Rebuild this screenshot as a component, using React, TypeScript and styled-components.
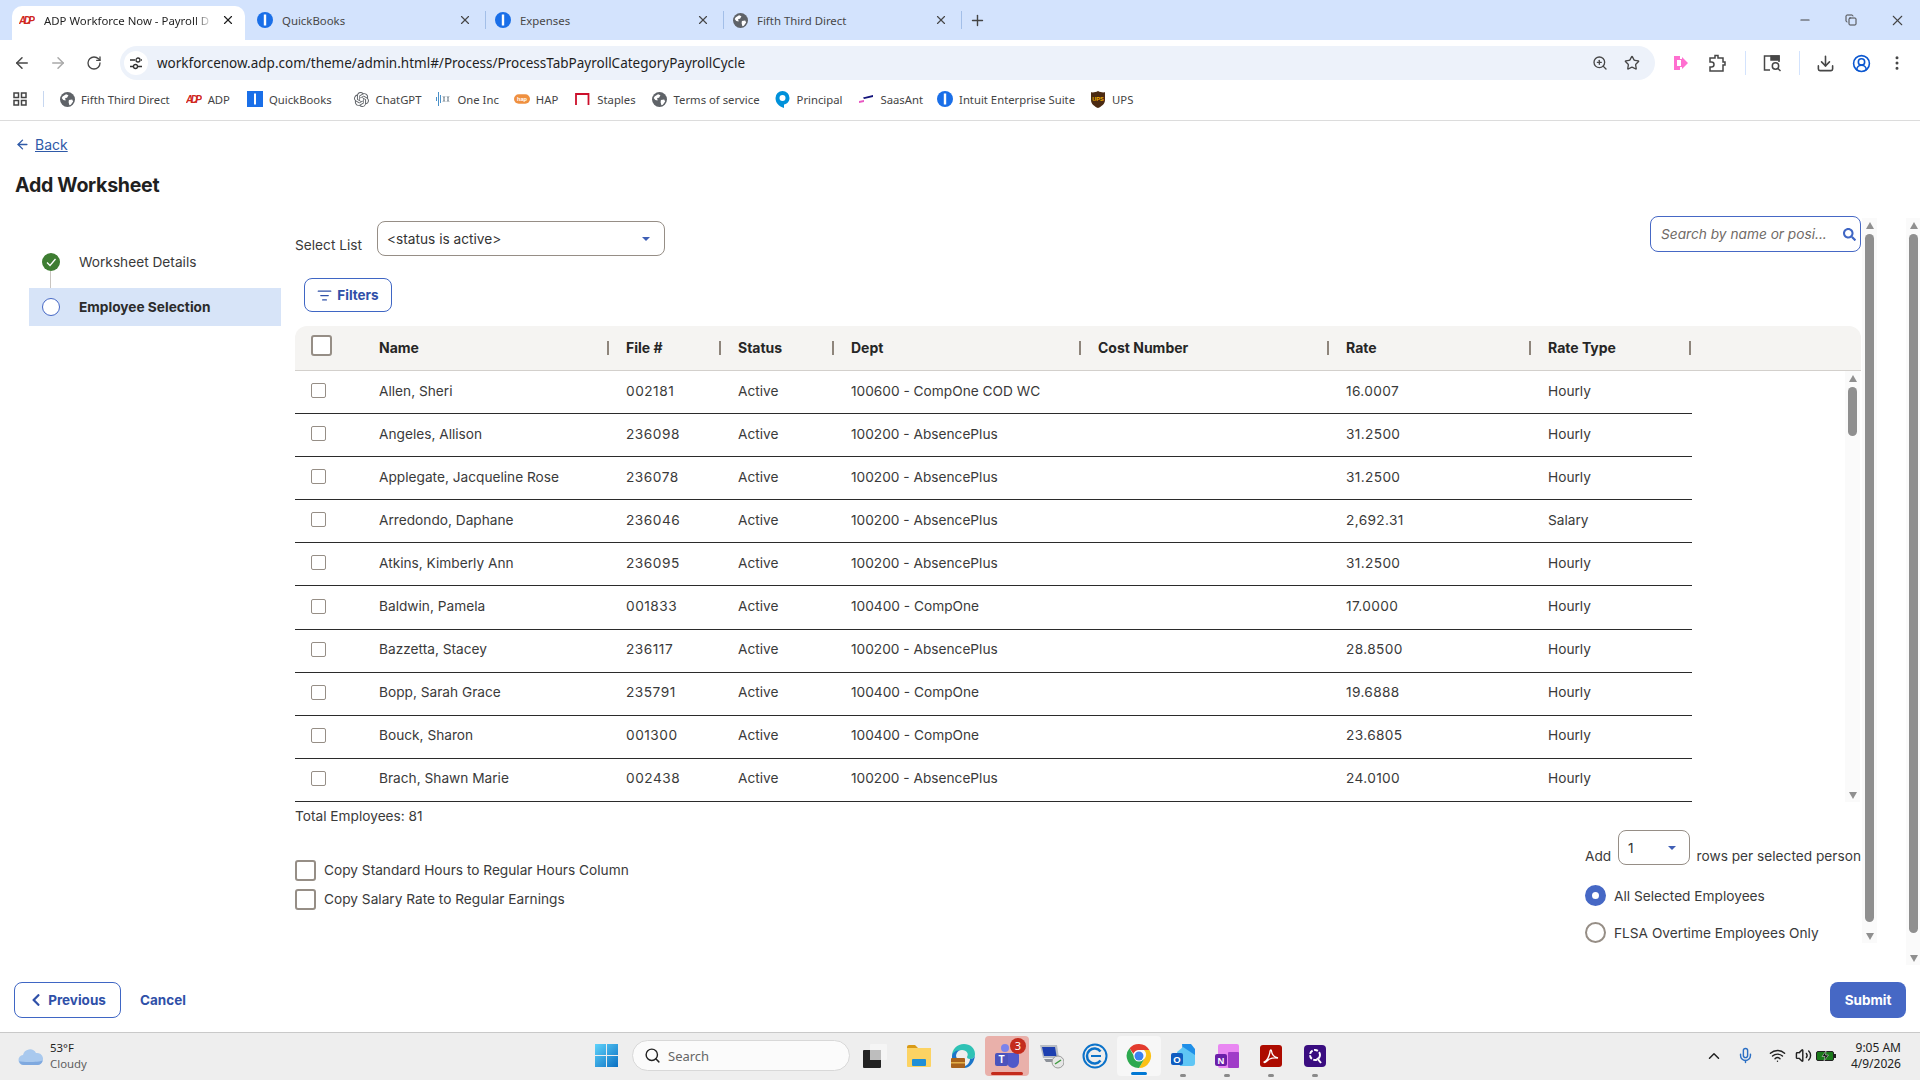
import React from 'react'
import styled, { createGlobalStyle } from 'styled-components'
import {
  ArrowLeft, ArrowRight, RotateCw, Star, ZoomIn, Download, EllipsisVertical, Minus, X, Plus,
  ListFilter, ChevronUp, Mic, Wifi, Volume2, Search as SearchGlyph, CircleUserRound, Copy,
} from 'lucide-react'
import { FaChevronLeft, FaSearch } from 'react-icons/fa'
import { SiOpenai } from 'react-icons/si'

const chromeFont = `"Noto Sans", "Liberation Sans", sans-serif`
const pageFont = `Inter, "Liberation Sans", sans-serif`

const GlobalStyle = createGlobalStyle`
  html, body {
    margin: 0;
    padding: 0;
    width: 1920px;
    height: 1080px;
    overflow: hidden;
    background: #fff;
  }
  * { box-sizing: border-box; }
`

const Screen = styled.div`
  width: 1920px;
  height: 1080px;
  display: flex;
  flex-direction: column;
  font-family: ${pageFont};
  font-size: 13.7px;
  color: #3a3a3a;
  overflow: hidden;
`

/* browser chrome */
const TabStrip = styled.div`
  height: 40px;
  flex: none;
  display: flex;
  align-items: flex-end;
  padding-left: 12px;
  background: #d3e3fd;
  font-family: ${chromeFont};
  font-size: 11.4px;
  color: #444;
`

const Tab = styled.div<{ $active?: boolean }>`
  position: relative;
  width: ${p => (p.$active ? '233px' : '238px')};
  margin-right: ${p => (p.$active ? '5px' : '0')};
  height: 34px;
  display: flex;
  align-items: center;
  padding: 0 ${p => (p.$active ? '10px' : '16px')} 6px 7px;
  gap: 9px;
  border-radius: 10px 10px 0 0;
  background: ${p => (p.$active ? '#fff' : 'transparent')};
  color: ${p => (p.$active ? '#1f1f1f' : '#474747')};
`

const TabSeparator = styled.span`
  position: absolute;
  right: 2px;
  top: 5px;
  width: 1px;
  height: 18px;
  background: #a3bfe8;
`

const TabTitle = styled.span<{ $fade?: boolean }>`
  flex: 1;
  overflow: hidden;
  white-space: nowrap;
  ${p => p.$fade && 'mask-image: linear-gradient(to right, #000 90%, transparent);'}
`

const NewTab = styled.div`
  height: 34px;
  width: 26px;
  margin-left: 5px;
  padding-bottom: 6px;
  display: flex;
  align-items: center;
  color: #444;
`

const WindowControls = styled.div`
  margin-left: auto;
  height: 40px;
  display: flex;
  align-items: center;
  color: #444;
`

const WindowButton = styled.div`
  width: 46px;
  display: flex;
  justify-content: center;
`

const Toolbar = styled.div`
  height: 40px;
  flex: none;
  display: flex;
  align-items: flex-end;
  padding-left: 4px;
  background: #fff;
  color: #474747;
`

const ToolSlot = styled.div<{ $dim?: boolean }>`
  width: 36px;
  height: 34px;
  display: flex;
  align-items: center;
  justify-content: center;
  color: ${p => (p.$dim ? '#a9a9a9' : '#474747')};
`

const AddressBar = styled.div`
  width: 1535px;
  height: 34px;
  margin: 0 8px 0 8px;
  padding-right: 7px;
  display: flex;
  align-items: center;
  border-radius: 17px;
  background: #edf2fa;
  font-family: ${chromeFont};
  font-size: 13.5px;
  color: #1f1f1f;
`

const SiteBadge = styled.div`
  width: 24px;
  height: 24px;
  margin: 0 9px 0 4px;
  border-radius: 50%;
  background: #fff;
  display: flex;
  align-items: center;
  justify-content: center;
`

const UrlText = styled.span`
  flex: 1;
  white-space: nowrap;
`

const AddressIcon = styled.div`
  width: 32px;
  display: flex;
  justify-content: center;
  color: #474747;
`

const ToolSeparator = styled.span<{ $left: number; $right: number }>`
  width: 1px;
  height: 24px;
  margin: 0 ${p => p.$right}px 5px ${p => p.$left}px;
  background: #d3e3fd;
`

const BookmarkBar = styled.div`
  height: 41px;
  flex: none;
  display: flex;
  align-items: center;
  padding: 0 0 2px 13px;
  border-bottom: 1px solid #dcdcdc;
  font-family: ${chromeFont};
  font-size: 11.3px;
  color: #444;
`

const BookmarkDivider = styled.span`
  width: 1px;
  height: 16px;
  margin: 0 15px 0 16px;
  background: #c7d7f0;
`

const Bookmark = styled.div<{ $gap: number }>`
  display: flex;
  align-items: center;
  gap: 6px;
  margin-right: ${p => p.$gap}px;
  white-space: nowrap;
`

const BookmarkIcon = styled.div`
  width: 16px;
  height: 16px;
  display: flex;
  align-items: center;
  justify-content: center;
`

/* page */
const Main = styled.main`
  flex: 1;
  min-height: 0;
  display: flex;
  flex-direction: column;
  background: #fff;
`

const BackLink = styled.a`
  height: 20px;
  margin: 13px 0 0 15px;
  display: flex;
  align-items: center;
  gap: 5px;
  font-size: 14px;
  color: #2f5aa8;
`

const BackText = styled.span`
  text-decoration: underline;
`

const Title = styled.h1`
  margin: 16px 0 16px 15px;
  height: 30px;
  font-size: 19.6px;
  line-height: 30px;
  font-weight: 700;
  color: #1f1f1f;
  letter-spacing: -0.3px;
`

const Columns = styled.div`
  height: 749px;
  display: flex;
  align-items: flex-start;
`

const Sidebar = styled.nav`
  width: 295px;
  flex: none;
  padding: 27px 14px 0 29px;
  display: flex;
  flex-direction: column;
  gap: 7px;
`

const Step = styled.div<{ $active?: boolean }>`
  position: relative;
  height: 38px;
  display: flex;
  align-items: center;
  padding-left: 13px;
  gap: 19px;
  font-weight: ${p => (p.$active ? 700 : 400)};
  color: ${p => (p.$active ? '#2b2b2b' : '#3a3a3a')};
  background: ${p => (p.$active ? '#d7e4f8' : 'transparent')};
`

const StepLabel = styled.span`
  padding-bottom: 1px;
`

const StepLine = styled.span`
  position: absolute;
  left: 21px;
  top: 28px;
  width: 1px;
  height: 17px;
  background: #c9c5c0;
`

const StepDot = styled.span`
  width: 18px;
  height: 18px;
  border-radius: 50%;
  border: 1px solid #4668c5;
  background: #fff;
`

const WorkArea = styled.section`
  width: 1566px;
  flex: none;
  display: flex;
  flex-direction: column;
`

const TopRow = styled.div`
  height: 40px;
  display: flex;
  align-items: flex-start;
`

const FieldLabel = styled.span`
  margin: 20px 15px 0 0;
  line-height: 18px;
  white-space: nowrap;
`

const SelectBox = styled.div<{ $wide?: boolean }>`
  width: ${p => (p.$wide ? '288px' : '72px')};
  height: 35px;
  margin-top: ${p => (p.$wide ? '5px' : '0')};
  padding: 0 ${p => (p.$wide ? '14px' : '13px')} 0 9px;
  display: flex;
  align-items: center;
  justify-content: space-between;
  border: 1px solid #968e86;
  border-radius: 8px;
  color: #333;
  background: #fff;
`

const Caret = styled.span`
  width: 0;
  height: 0;
  border-left: 4px solid transparent;
  border-right: 4px solid transparent;
  border-top: 4px solid #3f5fb5;
`

const SearchBox = styled.div`
  width: 211px;
  height: 36px;
  margin-left: auto;
  padding: 0 4px 0 10px;
  display: flex;
  align-items: center;
  justify-content: space-between;
  border: 1px solid #4668c5;
  border-radius: 8px;
  font-style: italic;
  color: #6f6a66;
  white-space: nowrap;
`

const SearchIcon = styled(FaSearch)`
  color: #3f66c4;
  font-size: 13px;
`

const OutlineButton = styled.button<{ $width: number }>`
  width: ${p => p.$width}px;
  height: ${p => (p.$width < 100 ? 34 : 36)}px;
  padding: 0;
  display: flex;
  align-items: center;
  justify-content: center;
  gap: 5px;
  background: #fff;
  border: 1px solid #3f66c4;
  border-radius: 8px;
  font-family: ${pageFont};
  font-size: 13.5px;
  font-weight: 700;
  color: #2f50a8;
`

const FiltersWrap = styled.div`
  margin: 22px 0 14px 9px;
`

const TableHead = styled.div`
  height: 45px;
  display: grid;
  grid-template-columns: 84px 247px 112px 113px 247px 248px 202px 144px;
  align-items: center;
  background: #f5f4f2;
  border-radius: 12px 12px 0 0;
  border-bottom: 1px solid #d3d0cc;
`

const HeadCell = styled.div<{ $last?: boolean }>`
  display: flex;
  align-items: center;
  justify-content: space-between;
  padding-right: ${p => (p.$last ? '1px' : '17px')};
  padding-bottom: 1px;
  font-size: 14px;
  font-weight: 700;
  color: #262626;
`

const HeadSep = styled.span`
  width: 2px;
  height: 14px;
  background: #8e857c;
`

const HeadCheckCell = styled.div`
  padding: 0 0 6px 16px;
`

const CheckBox = styled.span<{ $size: number }>`
  display: block;
  flex: none;
  width: ${p => p.$size}px;
  height: ${p => p.$size}px;
  border: ${p => (p.$size > 16 ? '2px' : '1px')} solid #968e86;
  border-radius: ${p => (p.$size > 16 ? 3 : 2)}px;
  background: #fff;
`

const TableBody = styled.div`
  height: 431px;
  display: flex;
  justify-content: space-between;
  padding-right: 1px;
`

const Rows = styled.div`
  width: 1397px;
  display: flex;
  flex-direction: column;
`

const Row = styled.div`
  flex: 1;
  display: grid;
  grid-template-columns: 84px 247px 112px 113px 247px 248px 202px 144px;
  align-items: center;
  padding-bottom: 3px;
  border-bottom: 1px solid #2b2b2b;
  color: #3a3a3a;
`

const RowCheckCell = styled.div`
  padding-left: 16px;
`

const NumberCell = styled.span<{ $spacing: number }>`
  letter-spacing: ${p => p.$spacing}px;
`

const ScrollTrack = styled.div<{ $height: number }>`
  width: 15px;
  flex: none;
  height: ${p => p.$height}px;
  display: flex;
  flex-direction: column;
  align-items: center;
  background: #fafafa;
  padding: 4px 0 3px;
`

const ArrowUp = styled.span`
  flex: none;
  width: 0;
  height: 0;
  border-left: 4.5px solid transparent;
  border-right: 4.5px solid transparent;
  border-bottom: 7px solid #8f8f8f;
`

const ArrowDown = styled(ArrowUp)`
  border-bottom: 0;
  border-top: 7px solid #8f8f8f;
`

const Thumb = styled.span<{ $height?: number; $after: number }>`
  width: 9px;
  margin: 5px 0 ${p => p.$after}px;
  border-radius: 5px;
  background: #8f8f8f;
  ${p => (p.$height ? `height: ${p.$height}px; flex: none;` : 'flex: 1;')}
`

const TrackSpacer = styled.span`
  flex: 1;
`

const Total = styled.div`
  margin-top: 4px;
  height: 20px;
  line-height: 20px;
`

const OptionsRow = styled.div`
  margin-top: 4px;
  display: flex;
  justify-content: space-between;
`

const CopyOptions = styled.div`
  padding-top: 30px;
  display: flex;
  flex-direction: column;
  gap: 9px;
`

const CopyOption = styled.label`
  height: 20px;
  display: flex;
  align-items: center;
  gap: 8px;
`

const CopyText = styled.span`
  padding-bottom: 1px;
`

const RowOptions = styled.div`
  width: 276px;
  display: flex;
  flex-direction: column;
  gap: 16px;
`

const AddLine = styled.div`
  height: 35px;
  margin-bottom: 4px;
  display: flex;
  justify-content: space-between;
  white-space: nowrap;
`

const AddText = styled.span`
  padding-top: 17px;
  line-height: 18px;
`

const RadioLine = styled.label`
  height: 21px;
  display: flex;
  align-items: center;
  gap: 8px;
`

const Radio = styled.span<{ $on?: boolean }>`
  flex: none;
  width: 21px;
  height: 21px;
  border-radius: 50%;
  border: ${p => (p.$on ? '7px solid #4668c5' : '2px solid #968e86')};
  background: #fff;
`

const InnerBar = styled.div`
  margin: 2px 29px 0 1px;
`

const PageBar = styled.div`
  margin-top: 2px;
`

const Footer = styled.div`
  margin-top: 17px;
  padding: 0 14px;
  display: flex;
  align-items: center;
`

const CancelLink = styled.a`
  margin-left: 19px;
  font-size: 13.5px;
  font-weight: 700;
  color: #2f50a8;
`

const SubmitButton = styled.button`
  margin-left: auto;
  width: 76px;
  height: 36px;
  border: 0;
  border-radius: 8px;
  background: #4668c5;
  color: #fff;
  font-family: ${pageFont};
  font-size: 13.5px;
  font-weight: 700;
`

/* taskbar */
const Taskbar = styled.footer`
  height: 48px;
  flex: none;
  display: flex;
  align-items: center;
  padding-bottom: 2px;
  background: #eeeeee;
  border-top: 1px solid #c9c9c9;
  font-family: ${chromeFont};
  font-size: 11.4px;
  color: #1f1f1f;
`

const Weather = styled.div`
  width: 595px;
  flex: none;
  padding-left: 18px;
  display: flex;
  align-items: center;
  gap: 6px;
`

const WeatherText = styled.div`
  display: flex;
  flex-direction: column;
  line-height: 16px;
`

const WeatherSub = styled.span`
  color: #5f5f5f;
`

const TaskSearch = styled.div`
  width: 218px;
  height: 31px;
  margin-left: 14px;
  margin-right: 3px;
  padding-left: 11px;
  display: flex;
  align-items: center;
  gap: 7px;
  flex: none;
  border-radius: 16px;
  border: 1px solid #d8d8d8;
  background: #fbfbfb;
  font-size: 13px;
  color: #666;
`

const TaskIcon = styled.div<{ $state?: 'alert' | 'open' | 'running' }>`
  position: relative;
  width: 44px;
  height: 40px;
  flex: none;
  display: flex;
  align-items: center;
  justify-content: center;
  border-radius: 4px;
  background: ${p => (p.$state === 'alert' ? '#e9b0aa' : p.$state === 'open' ? '#f7f7f7' : 'transparent')};
  &::after {
    content: '';
    position: absolute;
    bottom: ${p => (p.$state === 'running' ? '-1px' : '1px')};
    left: 50%;
    transform: translateX(-50%);
    display: ${p => (p.$state ? 'block' : 'none')};
    width: ${p => (p.$state === 'alert' ? '32px' : p.$state === 'open' ? '16px' : '6px')};
    height: 3px;
    border-radius: 2px;
    background: ${p => (p.$state === 'alert' ? '#c42b1c' : p.$state === 'open' ? '#0078d4' : '#8a8a8a')};
  }
`

const TeamsBadge = styled.span`
  position: absolute;
  top: 2px;
  right: 3px;
  width: 16px;
  height: 16px;
  border-radius: 50%;
  background: #c42b1c;
  color: #fff;
  font-size: 11px;
  line-height: 16px;
  text-align: center;
`

const Tray = styled.div`
  margin-left: auto;
  padding-right: 19px;
  display: flex;
  align-items: center;
  color: #222;
`

const TraySlot = styled.div<{ $color?: string; $width: number }>`
  width: ${p => p.$width}px;
  display: flex;
  justify-content: center;
  color: ${p => p.$color || '#222'};
`

const Clock = styled.div`
  margin-left: 13px;
  display: flex;
  flex-direction: column;
  align-items: flex-end;
  font-size: 12px;
  line-height: 16px;
  color: #222;
`

/* drawn icons */
const GlobeIcon = () => (
  <svg width="15" height="15" viewBox="0 0 16 16">
    <circle cx="8" cy="8" r="8" fill="#5f6368" />
    <path d="M3 4.5 6.5 2.5 9 3.5 7.5 6 5.5 6.5 6 9 3.5 8.5 1.8 6.5ZM9.5 8.5 13 8l1 2-2.5 3.5-1.5.5-.8-3Z" fill="#fff" />
  </svg>
)

const AdpIcon = () => (
  <svg width="16" height="12" viewBox="0 0 16 12">
    <text x="0" y="10" fontFamily="Liberation Sans" fontSize="10" fontWeight="700" fontStyle="italic" fill="#d0271d" textLength="16">ADP</text>
  </svg>
)

const IntuitIcon = ({ size = 16 }: { size?: number }) => (
  <svg width={size} height={size} viewBox="0 0 16 16">
    <circle cx="8" cy="8" r="8" fill="#1a6fe8" />
    <rect x="6.8" y="2.5" width="2.4" height="11" fill="#fff" />
  </svg>
)

const QuickBooksSquare = () => (
  <svg width="16" height="16" viewBox="0 0 16 16">
    <rect width="16" height="16" fill="#1a6fe8" />
    <rect x="7" y="2.5" width="2" height="11" fill="#fff" />
  </svg>
)

const OneIncIcon = () => (
  <svg width="16" height="16" viewBox="0 0 16 16" stroke="#6d9fc4" strokeWidth="1" fill="none">
    <path d="M1.5 6v4M3.5 1v14M5.5 4v8" stroke="#4a90c8" />
    <path d="M8 5l2 6M10 5l-2 6M12 5l2 6M14 5l-2 6" stroke="#9aa5ad" />
  </svg>
)

const HapIcon = () => (
  <svg width="17" height="10" viewBox="0 0 17 10">
    <rect width="17" height="10" rx="5" fill="#ef9040" />
    <text x="8.5" y="7.4" fontSize="6" fontWeight="700" textAnchor="middle" fill="#fff" fontFamily="Liberation Sans">hap</text>
  </svg>
)

const StaplesIcon = () => (
  <svg width="16" height="14" viewBox="0 0 16 14" fill="none">
    <path d="M1 13V2h12.5v11" stroke="#cc0f2b" strokeWidth="1.8" />
  </svg>
)

const PrincipalIcon = () => (
  <svg width="15" height="17" viewBox="0 0 15 17">
    <path d="M7.5 0a7 7 0 0 1 7 7c0 3.5-2.5 6-5.5 6.6V17C4 15.5.5 12 .5 7a7 7 0 0 1 7-7Z" fill="#0091da" />
    <circle cx="7.5" cy="7" r="3" fill="#fff" />
  </svg>
)

const SaasAntIcon = () => (
  <svg width="15" height="10" viewBox="0 0 15 10">
    <path d="M4 3.5 14 1v2L5 5Z" fill="#14147a" />
    <path d="M0 7l5-1v2L0 9Z" fill="#e857c2" />
  </svg>
)

const UpsIcon = () => (
  <svg width="14" height="17" viewBox="0 0 14 17">
    <path d="M7 0c2.5 1.5 5 1.6 7 1.3V9c0 4-3.5 6.5-7 8-3.5-1.5-7-4-7-8V1.3C2 1.6 4.5 1.5 7 0Z" fill="#4b2a12" />
    <text x="7" y="10" fontSize="5.5" fontWeight="700" textAnchor="middle" fill="#f5b400" fontFamily="Liberation Sans">UPS</text>
  </svg>
)

const SiteTuneIcon = () => (
  <svg width="14" height="14" viewBox="0 0 14 14" fill="none" stroke="#333" strokeWidth="1.3">
    <path d="M1 4h5M1 10.5h3M9 10.5h4M12 4h1" />
    <circle cx="9" cy="4" r="2" />
    <circle cx="6.5" cy="10.5" r="2" />
  </svg>
)

const ShareArrowIcon = () => (
  <svg width="16" height="20" viewBox="0 0 16 20">
    <path d="M1 3h6v3h2V4l6 6-6 6v-2H7v3H1Z" fill="#ff6fd0" />
    <rect x="4" y="7" width="4" height="6" fill="#fff" />
  </svg>
)

const ExtensionIcon = () => (
  <svg width="18" height="20" viewBox="0 0 18 20" fill="none" stroke="#474747" strokeWidth="1.5">
    <path d="M2 5h5V2.5h3V5h5v4h2v3h-2v6H2v-4h1.500a1.500 1.500 0 0 0 0-5H2Z" />
  </svg>
)

const LensPanelIcon = () => (
  <svg width="20" height="20" viewBox="0 0 20 20" fill="none" stroke="#474747" strokeWidth="1.5">
    <path d="M8 17H2.5V3H17v6" />
    <path d="M9 3h8v4H9Z" fill="#474747" />
    <circle cx="13.5" cy="13" r="3.2" />
    <path d="m16 15.5 2.5 2.5" />
  </svg>
)

const StepCheck = () => (
  <svg width="18" height="18" viewBox="0 0 18 18">
    <circle cx="9" cy="9" r="9" fill="#3e7d32" />
    <path d="m5 9.5 3 3 5.5-6.5" fill="none" stroke="#fff" strokeWidth="1.3" />
  </svg>
)

const CloudIcon = () => (
  <svg width="26" height="20" viewBox="0 0 26 20">
    <path d="M6 19a5 5 0 0 1-1-10 7 7 0 0 1 13-2 6 6 0 0 1 2 12Z" fill="#a9c9ee" />
    <path d="M6 19a5 5 0 0 1-4.8-4c3 1.5 19 1.5 23.5-.5A6 6 0 0 1 20 19Z" fill="#7fa9df" />
  </svg>
)

const WindowsLogo = () => (
  <svg width="23" height="23" viewBox="0 0 23 23">
    <defs>
      <linearGradient id="winLogo" x1="0" y1="0" x2="1" y2="1">
        <stop offset="0" stopColor="#5fd3fb" />
        <stop offset="1" stopColor="#0a6fc2" />
      </linearGradient>
    </defs>
    <path d="M0 0h11v11H0ZM12 0h11v11H12ZM0 12h11v11H0ZM12 12h11v11H12Z" fill="url(#winLogo)" />
  </svg>
)

const TaskViewIcon = () => (
  <svg width="26" height="26" viewBox="0 0 26 26">
    <rect x="8" y="1" width="17" height="16" rx="1" fill="#f5f5f5" />
    <rect x="1" y="7" width="18" height="18" rx="1" fill="#222" />
    <rect x="8" y="7" width="11" height="10" fill="#bdbdbd" />
  </svg>
)

const FolderIcon = () => (
  <svg width="26" height="24" viewBox="0 0 26 24">
    <path d="M1 3a2 2 0 0 1 2-2h6l3 3h-11Z" fill="#d99a17" />
    <path d="M1 4h24v18a1 1 0 0 1-1 1H2a1 1 0 0 1-1-1Z" fill="#fcd363" />
    <rect x="6" y="15" width="14" height="7" rx="1" fill="#1f8fd6" />
  </svg>
)

const EdgeIcon = () => (
  <svg width="26" height="26" viewBox="0 0 26 26">
    <path d="M2 13C2 6 7 1 14 1c6 0 11 4 11 10 0 3-2 5-5 5-2 0-3-1-3-2 2-3 0-7-5-7-5 0-9 3-10 6Z" fill="#2fc2b5" />
    <path d="M25 11c0 8-5 14-11 14-1 0-2 0-3-1 4 0 9-3 9-8 3 0 5-2 5-5Z" fill="#1b75c9" />
    <path d="M2 13c0-3 4-6 8-6-2 1-4 3-4 6l1 3H2Z" fill="#1b75c9" />
    <rect x="1" y="15" width="14" height="10" rx="1" fill="#a8621d" />
    <rect x="1" y="19" width="14" height="1.5" fill="#e3b04b" />
  </svg>
)

const TeamsIcon = () => (
  <svg width="26" height="26" viewBox="0 0 26 26">
    <circle cx="11" cy="5" r="4" fill="#7b83eb" />
    <path d="M11 10h12a2 2 0 0 1 2 2v7a6 6 0 0 1-12 0Z" fill="#5059c9" />
    <rect x="1" y="10" width="13" height="13" rx="2" fill="#4b53bc" />
    <text x="7.5" y="20" fontSize="10" fontWeight="700" textAnchor="middle" fill="#fff" fontFamily="Liberation Sans">T</text>
  </svg>
)

const RemoteIcon = () => (
  <svg width="26" height="26" viewBox="0 0 26 26">
    <path d="M2 2h17l2 13H5Z" fill="#b7bcc4" />
    <path d="M4 4h13l1.5 9H6Z" fill="#1d3fb0" />
    <path d="M6 16h15v3H8Z" fill="#8d9299" />
    <circle cx="20" cy="19" r="6" fill="#e6e6e6" stroke="#999" />
    <path d="m17 21 6-4" stroke="#3e9a3e" strokeWidth="1.5" />
  </svg>
)

const CIcon = () => (
  <svg width="26" height="26" viewBox="0 0 26 26" fill="none" stroke="#0b72c9">
    <circle cx="13" cy="13" r="11.5" strokeWidth="2" />
    <path d="M18.5 8.5a7.5 7.5 0 1 0 0 9" strokeWidth="2.5" />
    <path d="M9 13h10" strokeWidth="2" />
  </svg>
)

const ChromeIcon = () => (
  <svg width="26" height="26" viewBox="0 0 26 26">
    <path d="M13 1a12 12 0 0 1 10.4 6H13a6 6 0 0 0-5.6 3.800L3.500 5.300A12 12 0 0 1 13 1Z" fill="#e33b2e" />
    <path d="M23.4 7A12 12 0 0 1 13 25l5.2-9a6 6 0 0 0-.2-9Z" fill="#fbc116" />
    <path d="M13 25A12 12 0 0 1 3.500 5.300l5.300 9.200A6 6 0 0 0 18.2 16l-5.200 9Z" fill="#2da94f" />
    <circle cx="13" cy="13" r="5.5" fill="#fff" />
    <circle cx="13" cy="13" r="4.5" fill="#3b82f0" />
  </svg>
)

const OutlookIcon = () => (
  <svg width="26" height="26" viewBox="0 0 26 26">
    <path d="M12 1h9l4 5v10L13 11Z" fill="#1f8fe8" />
    <path d="M7 9l6-5 12 8v8a3 3 0 0 1-3 3H10Z" fill="#5fc6f5" />
    <rect x="1" y="10" width="12" height="12" rx="2" fill="#0f5cc0" />
    <text x="7" y="19.5" fontSize="9.5" fontWeight="700" textAnchor="middle" fill="#fff" fontFamily="Liberation Sans">O</text>
  </svg>
)

const OneNoteIcon = () => (
  <svg width="26" height="26" viewBox="0 0 26 26">
    <rect x="4" y="1" width="21" height="24" rx="2" fill="#e987f2" />
    <rect x="14" y="9" width="11" height="16" rx="1" fill="#a03cc8" />
    <rect x="1" y="11" width="12" height="12" rx="2" fill="#6b1fa8" />
    <text x="7" y="20.5" fontSize="9.5" fontWeight="700" textAnchor="middle" fill="#fff" fontFamily="Liberation Sans">N</text>
  </svg>
)

const PdfIcon = () => (
  <svg width="22" height="22" viewBox="0 0 22 22">
    <rect width="22" height="22" rx="3" fill="#ad0b00" />
    <path d="M4 17c3-1 5-5 6-10 0-2 1-3 1.5-1 .3 3 2 6 6.5 7-4-.5-9 .5-11 3-1 1.5-3 2-3 1Z" fill="none" stroke="#fff" strokeWidth="1.3" />
  </svg>
)

const SnagIcon = () => (
  <svg width="22" height="22" viewBox="0 0 22 22">
    <rect width="22" height="22" rx="4" fill="#3a0d80" />
    <circle cx="11" cy="10" r="5" fill="none" stroke="#fff" strokeWidth="2" strokeDasharray="4 1.5" />
    <path d="m13 13 4 5" stroke="#fff" strokeWidth="2" />
  </svg>
)

const BatteryIcon = () => (
  <svg width="20" height="12" viewBox="0 0 20 12">
    <rect x="0.5" y="1.5" width="17" height="9" rx="1.5" fill="#1a7a1a" stroke="#222" />
    <rect x="18" y="4" width="2" height="4" fill="#222" />
    <path d="M10 1 6 6.5h3l-1 4.5 4.5-6H9.5Z" fill="#111" stroke="#eee" strokeWidth="0.5" />
  </svg>
)

const tabs = [
  { title: 'ADP Workforce Now - Payroll D', icon: <AdpIcon />, active: true },
  { title: 'QuickBooks', icon: <IntuitIcon /> },
  { title: 'Expenses', icon: <IntuitIcon /> },
  { title: 'Fifth Third Direct', icon: <GlobeIcon /> },
]

const bookmarks = [
  { label: 'Fifth Third Direct', icon: <GlobeIcon />, gap: 16 },
  { label: 'ADP', icon: <AdpIcon />, gap: 17 },
  { label: 'QuickBooks', icon: <QuickBooksSquare />, gap: 22 },
  { label: 'ChatGPT', icon: <SiOpenai size={15} color="#5f6368" />, gap: 14 },
  { label: 'One Inc', icon: <OneIncIcon />, gap: 15 },
  { label: 'HAP', icon: <HapIcon />, gap: 17 },
  { label: 'Staples', icon: <StaplesIcon />, gap: 16 },
  { label: 'Terms of service', icon: <GlobeIcon />, gap: 15 },
  { label: 'Principal', icon: <PrincipalIcon />, gap: 16 },
  { label: 'SaasAnt', icon: <SaasAntIcon />, gap: 14 },
  { label: 'Intuit Enterprise Suite', icon: <IntuitIcon />, gap: 15 },
  { label: 'UPS', icon: <UpsIcon />, gap: 0 },
]

const headers = ['Name', 'File #', 'Status', 'Dept', 'Cost Number', 'Rate', 'Rate Type']

const employees = [
  ['Allen, Sheri', '002181', '100600 - CompOne COD WC', '16.0007', 'Hourly'],
  ['Angeles, Allison', '236098', '100200 - AbsencePlus', '31.2500', 'Hourly'],
  ['Applegate, Jacqueline Rose', '236078', '100200 - AbsencePlus', '31.2500', 'Hourly'],
  ['Arredondo, Daphane', '236046', '100200 - AbsencePlus', '2,692.31', 'Salary'],
  ['Atkins, Kimberly Ann', '236095', '100200 - AbsencePlus', '31.2500', 'Hourly'],
  ['Baldwin, Pamela', '001833', '100400 - CompOne', '17.0000', 'Hourly'],
  ['Bazzetta, Stacey', '236117', '100200 - AbsencePlus', '28.8500', 'Hourly'],
  ['Bopp, Sarah Grace', '235791', '100400 - CompOne', '19.6888', 'Hourly'],
  ['Bouck, Sharon', '001300', '100400 - CompOne', '23.6805', 'Hourly'],
  ['Brach, Shawn Marie', '002438', '100200 - AbsencePlus', '24.0100', 'Hourly'],
]

const App = () => (
  <Screen>
    <GlobalStyle />
    <TabStrip>
      {tabs.map(tab => (
        <Tab key={tab.title} $active={tab.active}>
          {tab.icon}
          <TabTitle $fade={tab.active}>{tab.title}</TabTitle>
          <X size={14} strokeWidth={2} />
          {!tab.active && <TabSeparator />}
        </Tab>
      ))}
      <NewTab><Plus size={17} /></NewTab>
      <WindowControls>
        <WindowButton><Minus size={14} /></WindowButton>
        <WindowButton><Copy size={12} /></WindowButton>
        <WindowButton><X size={17} strokeWidth={1.5} /></WindowButton>
      </WindowControls>
    </TabStrip>

    <Toolbar>
      <ToolSlot><ArrowLeft size={18} /></ToolSlot>
      <ToolSlot $dim><ArrowRight size={18} /></ToolSlot>
      <ToolSlot><RotateCw size={16} /></ToolSlot>
      <AddressBar>
        <SiteBadge><SiteTuneIcon /></SiteBadge>
        <UrlText>workforcenow.adp.com/theme/admin.html#/Process/ProcessTabPayrollCategoryPayrollCycle</UrlText>
        <AddressIcon><ZoomIn size={16} /></AddressIcon>
        <AddressIcon><Star size={16} /></AddressIcon>
      </AddressBar>
      <ToolSlot><ShareArrowIcon /></ToolSlot>
      <ToolSlot><ExtensionIcon /></ToolSlot>
      <ToolSeparator $left={10} $right={8} />
      <ToolSlot><LensPanelIcon /></ToolSlot>
      <ToolSeparator $left={9} $right={7} />
      <ToolSlot><Download size={19} /></ToolSlot>
      <ToolSlot><CircleUserRound size={19} color="#0b57d0" /></ToolSlot>
      <ToolSlot><EllipsisVertical size={18} /></ToolSlot>
    </Toolbar>

    <BookmarkBar>
      <svg width="14" height="14" viewBox="0 0 14 14" fill="none" stroke="#444" strokeWidth="1.5">
        <rect x="1" y="1" width="4.5" height="4.5" />
        <rect x="8.5" y="1" width="4.5" height="4.5" />
        <rect x="1" y="8.5" width="4.5" height="4.5" />
        <rect x="8.5" y="8.5" width="4.5" height="4.5" />
      </svg>
      <BookmarkDivider />
      {bookmarks.map(b => (
        <Bookmark key={b.label} $gap={b.gap}>
          <BookmarkIcon>{b.icon}</BookmarkIcon>
          {b.label}
        </Bookmark>
      ))}
    </BookmarkBar>

    <Main>
      <BackLink>
        <ArrowLeft size={15} strokeWidth={2.2} />
        <BackText>Back</BackText>
      </BackLink>
      <Title>Add Worksheet</Title>

      <Columns>
        <Sidebar>
          <Step>
            <StepCheck />
            <StepLabel>Worksheet Details</StepLabel>
            <StepLine />
          </Step>
          <Step $active>
            <StepDot />
            <StepLabel>Employee Selection</StepLabel>
          </Step>
        </Sidebar>

        <WorkArea>
          <TopRow>
            <FieldLabel>Select List</FieldLabel>
            <SelectBox $wide>
              &lt;status is active&gt;
              <Caret />
            </SelectBox>
            <SearchBox>
              Search by name or posi...
              <SearchIcon />
            </SearchBox>
          </TopRow>

          <FiltersWrap>
            <OutlineButton $width={88}>
              <ListFilter size={15} />
              Filters
            </OutlineButton>
          </FiltersWrap>

          <TableHead>
            <HeadCheckCell><CheckBox $size={21} /></HeadCheckCell>
            {headers.map((h, i) => (
              <HeadCell key={h} $last={i === headers.length - 1}>
                {h}
                <HeadSep />
              </HeadCell>
            ))}
          </TableHead>

          <TableBody>
            <Rows>
              {employees.map(e => (
                <Row key={e[0]}>
                  <RowCheckCell><CheckBox $size={15} /></RowCheckCell>
                  <span>{e[0]}</span>
                  <NumberCell $spacing={0.5}>{e[1]}</NumberCell>
                  <span>Active</span>
                  <span>{e[2]}</span>
                  <span />
                  <NumberCell $spacing={0.35}>{e[3]}</NumberCell>
                  <span>{e[4]}</span>
                </Row>
              ))}
            </Rows>
            <ScrollTrack $height={431}>
              <ArrowUp />
              <Thumb $height={49} $after={0} />
              <TrackSpacer />
              <ArrowDown />
            </ScrollTrack>
          </TableBody>

          <Total>Total Employees: 81</Total>

          <OptionsRow>
            <CopyOptions>
              <CopyOption><CheckBox $size={21} /><CopyText>Copy Standard Hours to Regular Hours Column</CopyText></CopyOption>
              <CopyOption><CheckBox $size={21} /><CopyText>Copy Salary Rate to Regular Earnings</CopyText></CopyOption>
            </CopyOptions>
            <RowOptions>
              <AddLine>
                <AddText>Add</AddText>
                <SelectBox>1<Caret /></SelectBox>
                <AddText>rows per selected person</AddText>
              </AddLine>
              <RadioLine><Radio $on />All Selected Employees</RadioLine>
              <RadioLine><Radio />FLSA Overtime Employees Only</RadioLine>
            </RowOptions>
          </OptionsRow>
        </WorkArea>

        <InnerBar>
          <ScrollTrack $height={725}>
            <ArrowUp />
            <Thumb $after={11} />
            <ArrowDown />
          </ScrollTrack>
        </InnerBar>
        <PageBar>
          <ScrollTrack $height={747}>
            <ArrowUp />
            <Thumb $after={22} />
            <ArrowDown />
          </ScrollTrack>
        </PageBar>
      </Columns>

      <Footer>
        <OutlineButton $width={107}>
          <FaChevronLeft size={14} />
          Previous
        </OutlineButton>
        <CancelLink>Cancel</CancelLink>
        <SubmitButton>Submit</SubmitButton>
      </Footer>
    </Main>

    <Taskbar>
      <Weather>
        <CloudIcon />
        <WeatherText>
          <span>53°F</span>
          <WeatherSub>Cloudy</WeatherSub>
        </WeatherText>
      </Weather>
      <WindowsLogo />
      <TaskSearch>
        <SearchGlyph size={17} color="#222" />
        Search
      </TaskSearch>
      <TaskIcon><TaskViewIcon /></TaskIcon>
      <TaskIcon><FolderIcon /></TaskIcon>
      <TaskIcon><EdgeIcon /></TaskIcon>
      <TaskIcon $state="alert"><TeamsIcon /><TeamsBadge>3</TeamsBadge></TaskIcon>
      <TaskIcon><RemoteIcon /></TaskIcon>
      <TaskIcon><CIcon /></TaskIcon>
      <TaskIcon $state="open"><ChromeIcon /></TaskIcon>
      <TaskIcon $state="running"><OutlookIcon /></TaskIcon>
      <TaskIcon $state="running"><OneNoteIcon /></TaskIcon>
      <TaskIcon $state="running"><PdfIcon /></TaskIcon>
      <TaskIcon $state="running"><SnagIcon /></TaskIcon>
      <Tray>
        <TraySlot $width={32}><ChevronUp size={18} /></TraySlot>
        <TraySlot $width={32} $color="#2b6fc4"><Mic size={17} /></TraySlot>
        <TraySlot $width={32}><Wifi size={17} /></TraySlot>
        <TraySlot $width={20}><Volume2 size={17} /></TraySlot>
        <TraySlot $width={24}><BatteryIcon /></TraySlot>
        <Clock>
          <span>9:05 AM</span>
          <span>4/9/2026</span>
        </Clock>
      </Tray>
    </Taskbar>
  </Screen>
)

export default App
